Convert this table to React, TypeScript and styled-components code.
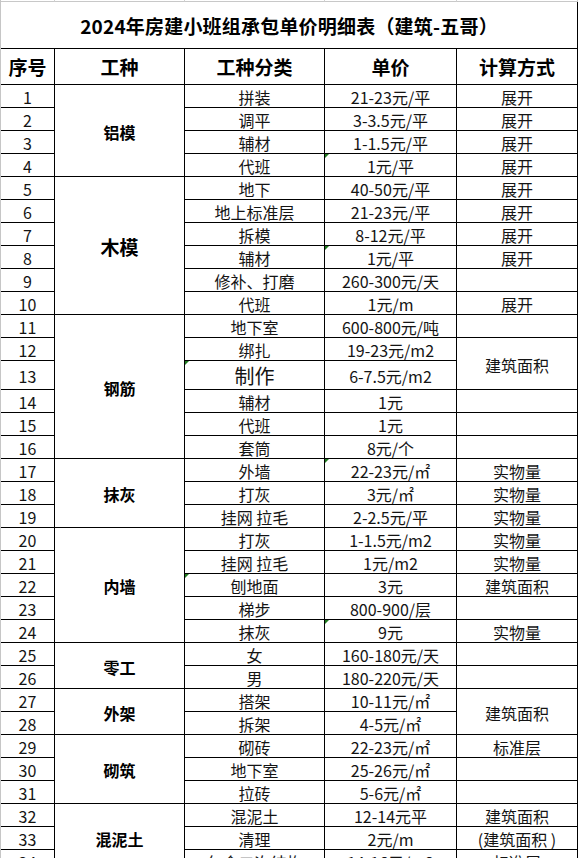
import React from "react"
import styled, { createGlobalStyle, css } from "styled-components"

const GlobalStyle = createGlobalStyle`
  html, body {
    margin: 0;
    padding: 0;
    background: #fff;
  }
  body {
    font-family: "Noto Sans CJK SC", "Noto Sans", sans-serif;
    color: #111;
  }
`

type Row = { cat: string; price: string; big?: boolean; flag?: 3 | 4 }
type Span = { text: string; start: number; span: number; big?: boolean }

const rows: Row[] = [
  { cat: "拼装", price: "21-23元/平" },
  { cat: "调平", price: "3-3.5元/平" },
  { cat: "辅材", price: "1-1.5元/平" },
  { cat: "代班", price: "1元/平", flag: 4 },
  { cat: "地下", price: "40-50元/平" },
  { cat: "地上标准层", price: "21-23元/平" },
  { cat: "拆模", price: "8-12元/平" },
  { cat: "辅材", price: "1元/平", flag: 4 },
  { cat: "修补、打磨", price: "260-300元/天" },
  { cat: "代班", price: "1元/m" },
  { cat: "地下室", price: "600-800元/吨" },
  { cat: "绑扎", price: "19-23元/m2" },
  { cat: "制作", price: "6-7.5元/m2", big: true, flag: 3 },
  { cat: "辅材", price: "1元" },
  { cat: "代班", price: "1元" },
  { cat: "套筒", price: "8元/个" },
  { cat: "外墙", price: "22-23元/㎡", flag: 4 },
  { cat: "打灰", price: "3元/㎡" },
  { cat: "挂网 拉毛", price: "2-2.5元/平" },
  { cat: "打灰", price: "1-1.5元/m2" },
  { cat: "挂网 拉毛", price: "1元/m2" },
  { cat: "刨地面", price: "3元", flag: 3 },
  { cat: "梯步", price: "800-900/层" },
  { cat: "抹灰", price: "9元", flag: 4 },
  { cat: "女", price: "160-180元/天" },
  { cat: "男", price: "180-220元/天" },
  { cat: "搭架", price: "10-11元/㎡" },
  { cat: "拆架", price: "4-5元/㎡" },
  { cat: "砌砖", price: "22-23元/㎡" },
  { cat: "地下室", price: "25-26元/㎡" },
  { cat: "拉砖", price: "5-6元/㎡" },
  { cat: "混泥土", price: "12-14元平" },
  { cat: "清理", price: "2元/m" },
  { cat: "包含二次结构", price: "14-16元/m2" },
]

const groups: Span[] = [
  { text: "铝模", start: 1, span: 4 },
  { text: "木模", start: 5, span: 6, big: true },
  { text: "钢筋", start: 11, span: 6 },
  { text: "抹灰", start: 17, span: 3 },
  { text: "内墙", start: 20, span: 5 },
  { text: "零工", start: 25, span: 2 },
  { text: "外架", start: 27, span: 2 },
  { text: "砌筑", start: 29, span: 3 },
  { text: "混泥土", start: 32, span: 3 },
]

const methods: Span[] = [
  ...[1, 2, 3, 4, 5, 6, 7, 8].map((n) => ({ text: "展开", start: n, span: 1 })),
  { text: "", start: 9, span: 1 },
  { text: "展开", start: 10, span: 1 },
  { text: "", start: 11, span: 1 },
  { text: "建筑面积", start: 12, span: 2 },
  { text: "", start: 14, span: 1 },
  { text: "", start: 15, span: 1 },
  { text: "", start: 16, span: 1 },
  ...[17, 18, 19, 20, 21].map((n) => ({ text: "实物量", start: n, span: 1 })),
  { text: "建筑面积", start: 22, span: 1 },
  { text: "", start: 23, span: 1 },
  { text: "实物量", start: 24, span: 1 },
  { text: "", start: 25, span: 1 },
  { text: "", start: 26, span: 1 },
  { text: "建筑面积", start: 27, span: 2 },
  { text: "标准层", start: 29, span: 1 },
  { text: "", start: 30, span: 1 },
  { text: "", start: 31, span: 1 },
  { text: "建筑面积", start: 32, span: 1 },
  { text: "(建筑面积 )", start: 33, span: 1 },
  { text: "标准层", start: 34, span: 1 },
]

// grid rows: top strip, title, header, then data rows
const FIRST = 4
const template = ["2px", "47px", "36px", ...rows.map((r) => (r.big ? "29px" : "23px"))].join(" ")

const Page = styled.div`
  width: 578px;
  height: 858px;
  overflow: hidden;
  background: #fff;
`

const Sheet = styled.div<{ $rows: string }>`
  display: grid;
  grid-template-columns: 54px 130px 140px 132px 121px;
  grid-template-rows: ${(p) => p.$rows};
  width: 577px;
  border-left: 1px solid #c6c6c6;
`

const flagMark = css`
  &::before {
    content: "";
    position: absolute;
    left: 0;
    top: 0;
    border-top: 4px solid #1f7a1f;
    border-right: 4px solid transparent;
  }
`

const Cell = styled.div<{ $row: number; $col: number; $span?: number; $flag?: boolean }>`
  grid-row: ${(p) => p.$row} / span ${(p) => p.$span ?? 1};
  grid-column: ${(p) => p.$col};
  position: relative;
  box-sizing: border-box;
  display: flex;
  align-items: center;
  justify-content: center;
  padding-top: 2px;
  border-right: 1px solid #000;
  border-bottom: 1px solid #000;
  font-size: 16px;
  line-height: 1;
  white-space: nowrap;
  color: #141414;
  ${(p) => p.$flag && flagMark}
`

const StripCell = styled.div<{ $col: number }>`
  grid-row: 1;
  grid-column: ${(p) => p.$col};
  box-sizing: border-box;
  border-right: 1px solid #d2d2d2;
  border-bottom: 1px solid #c8c8c8;
`

const TitleCell = styled(Cell)`
  grid-column: 1 / span 5;
  padding-top: 0;
  font-size: 19px;
  font-weight: 700;
  color: #000;
  letter-spacing: 0.2px;
`

const HeadCell = styled(Cell)`
  padding-top: 0;
  font-size: 19px;
  font-weight: 700;
  color: #000;
`

const GroupCell = styled(Cell)<{ $big?: boolean }>`
  font-weight: 700;
  font-size: ${(p) => (p.$big ? "19px" : "16px")};
  color: #000;
`

const CatCell = styled(Cell)<{ $big?: boolean }>`
  font-size: ${(p) => (p.$big ? "20px" : "16px")};
`

const heads = ["序号", "工种", "工种分类", "单价", "计算方式"]

export default function App() {
  return (
    <Page>
      <GlobalStyle />
      <Sheet $rows={template}>
        {[1, 2, 3, 4, 5].map((c) => (
          <StripCell key={c} $col={c} />
        ))}
        <TitleCell $row={2} $col={1}>
          2024年房建小班组承包单价明细表（建筑-五哥）
        </TitleCell>
        {heads.map((h, i) => (
          <HeadCell key={h} $row={3} $col={i + 1}>
            {h}
          </HeadCell>
        ))}
        {rows.map((r, i) => (
          <React.Fragment key={i}>
            <Cell $row={FIRST + i} $col={1}>
              {i + 1}
            </Cell>
            <CatCell $row={FIRST + i} $col={3} $big={r.big} $flag={r.flag === 3}>
              {r.cat}
            </CatCell>
            <Cell $row={FIRST + i} $col={4} $flag={r.flag === 4}>
              {r.price}
            </Cell>
          </React.Fragment>
        ))}
        {groups.map((g) => (
          <GroupCell key={g.text} $row={FIRST + g.start - 1} $span={g.span} $col={2} $big={g.big}>
            {g.text}
          </GroupCell>
        ))}
        {methods.map((m) => (
          <Cell key={m.start} $row={FIRST + m.start - 1} $span={m.span} $col={5}>
            {m.text}
          </Cell>
        ))}
      </Sheet>
    </Page>
  )
}
